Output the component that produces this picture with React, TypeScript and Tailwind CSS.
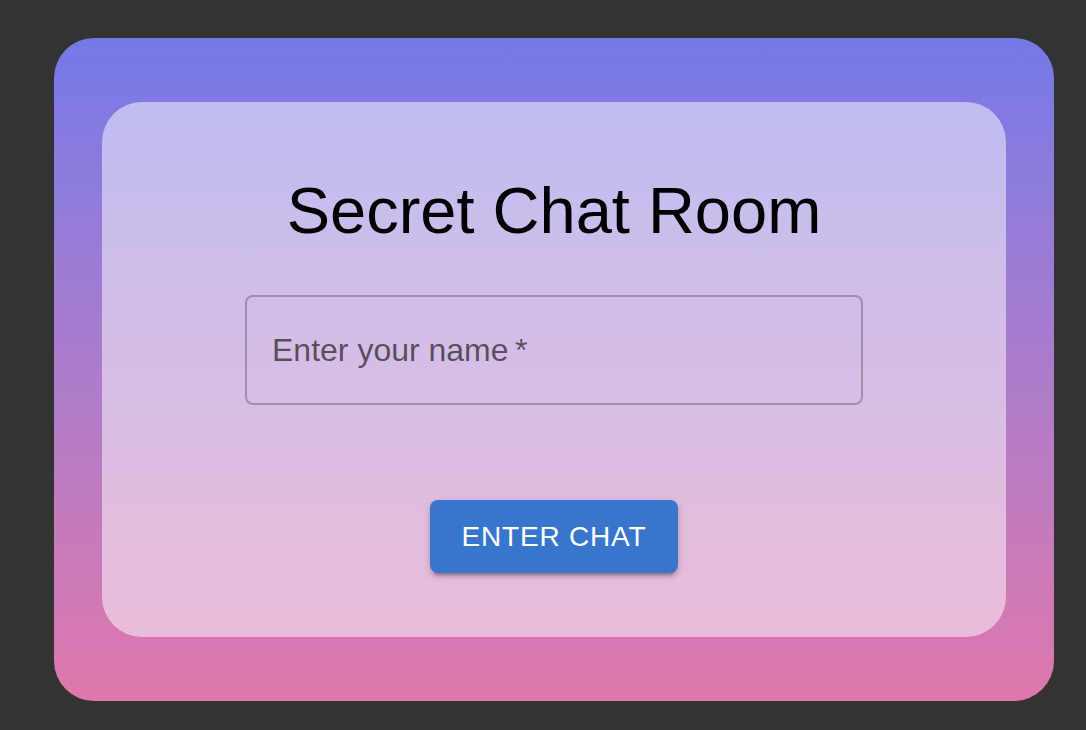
import React, { useState } from 'react';

const App = () => {
  const [name, setName] = useState('');

  return (
    <div
      className="min-h-[730px] w-full bg-[#333333] pl-[54px] pt-[38px]"
      style={{ fontFamily: '"Liberation Sans", Arial, sans-serif' }}
    >
      {/* Gradient frame */}
      <div className="w-[1000px] rounded-[40px] bg-gradient-to-b from-[#7479e8] to-[#df77ab] px-[48px] py-[64px]">
        {/* Glass card */}
        <div className="flex flex-col items-center rounded-[40px] bg-white/50 pt-[70px] pb-[64px]">
          <h1 className="text-[65px] leading-[1.2] font-normal text-black">
            Secret Chat Room
          </h1>

          <div className="relative mt-[45px] h-[110px] w-[618px] rounded-[8px] border-2 border-black/25">
            <input
              value={name}
              onChange={(e) => setName(e.target.value)}
              className="h-full w-full bg-transparent px-[26px] text-[32px] text-black/80 outline-none"
            />
            {!name && (
              <span className="pointer-events-none absolute left-[25px] top-1/2 -translate-y-1/2 text-[32px] text-black/60">
                Enter your name&thinsp;*
              </span>
            )}
          </div>

          <button className="mt-[95px] h-[73px] w-[248px] rounded-[8px] bg-[#3875cc] text-[28px] font-medium uppercase tracking-[0.8px] text-white shadow-[0_6px_2px_-4px_rgba(0,0,0,0.2),0_4px_4px_0_rgba(0,0,0,0.14),0_2px_10px_0_rgba(0,0,0,0.12)]">
            Enter Chat
          </button>
        </div>
      </div>
    </div>
  );
};

export default App;
